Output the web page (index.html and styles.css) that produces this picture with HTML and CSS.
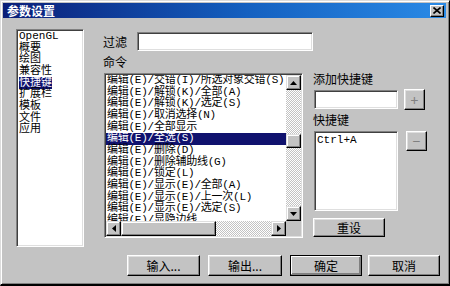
FILE: index.html
```html
<!DOCTYPE html>
<html lang="zh-CN">
<head>
  <meta charset="UTF-8" />
  <title>参数设置</title>
  <link rel="stylesheet" href="styles.css">
</head>
<body>

  <div class="window">
    <!-- title bar -->
    <div class="titlebar">
      <span class="title">参数设置</span>
      <span class="close-btn">
        <svg width="8" height="7" viewBox="0 0 8 7">
          <path d="M0.5 0.5 L7.5 6.5 M7.5 0.5 L0.5 6.5" stroke="#000" stroke-width="1.6" fill="none"/>
        </svg>
      </span>
    </div>

    <div class="body">
      <ul class="categories">
        <li>OpenGL</li>
        <li>概要</li>
        <li>绘图</li>
        <li>兼容性</li>
        <li><span class="selected">快捷键</span></li>
        <li>扩展栏</li>
        <li>模板</li>
        <li>文件</li>
        <li>应用</li>
      </ul>

      <div class="main">
        <div class="filter-row">
          <span class="label filter-label">过滤</span>
          <div class="field filter-input"></div>
        </div>
        <div class="label cmd-label">命令</div>

        <div class="field cmd-list">
          <ul class="cmd-items">
            <li>编辑(E)/交错(I)/所选对象交错(S)</li>
            <li>编辑(E)/解锁(K)/全部(A)</li>
            <li>编辑(E)/解锁(K)/选定(S)</li>
            <li>编辑(E)/取消选择(N)</li>
            <li>编辑(E)/全部显示</li>
            <li class="active">编辑(E)/全选(S)</li>
            <li>编辑(E)/删除(D)</li>
            <li>编辑(E)/删除辅助线(G)</li>
            <li>编辑(E)/锁定(L)</li>
            <li>编辑(E)/显示(E)/全部(A)</li>
            <li>编辑(E)/显示(E)/上一次(L)</li>
            <li>编辑(E)/显示(E)/选定(S)</li>
            <li>编辑(E)/显隐边线</li>
          </ul>
          <div class="vscroll">
            <span class="arrow-btn">
              <svg width="7" height="4" viewBox="0 0 7 4"><polygon points="3.5,0 7,4 0,4" fill="#000"/></svg>
            </span>
            <div class="track vtrack"><span class="thumb vthumb"></span></div>
            <span class="arrow-btn">
              <svg width="7" height="4" viewBox="0 0 7 4"><polygon points="0,0 7,0 3.5,4" fill="#000"/></svg>
            </span>
          </div>
          <div class="hscroll">
            <span class="arrow-btn">
              <svg width="4" height="7" viewBox="0 0 4 7"><polygon points="4,0 4,7 0,3.5" fill="#000"/></svg>
            </span>
            <span class="thumb hthumb"></span>
            <div class="track htrack"></div>
            <span class="arrow-btn">
              <svg width="4" height="7" viewBox="0 0 4 7"><polygon points="0,0 4,3.5 0,7" fill="#000"/></svg>
            </span>
          </div>
          <div class="corner"></div>
        </div>
      </div>

      <div class="side">
        <div class="label add-label">添加快捷键</div>
        <div class="add-row">
          <div class="field small-field"></div>
          <button class="btn small-btn plus-btn">+</button>
        </div>
        <div class="label keys-label">快捷键</div>
        <div class="keys-row">
          <div class="field keys-list">Ctrl+A</div>
          <button class="btn small-btn minus-btn">−</button>
        </div>
        <button class="btn reset-btn">重设</button>
      </div>
    </div>

    <!-- bottom buttons -->
    <div class="footer">
      <button class="btn btn-import">输入...</button>
      <button class="btn btn-export">输出...</button>
      <button class="btn btn-ok">确定</button>
      <button class="btn btn-cancel">取消</button>
    </div>
  </div>

</body>
</html>
```

FILE: styles.css
```css
body, html {
  margin: 0;
  padding: 0;
  background: #c3c3c3;
  font-family: "Noto Sans CJK SC", sans-serif;
  color: #000;
}

.window {
  width: 450px;
  height: 286px;
  box-sizing: border-box;
  padding: 2px 3px 2px 2px;
  background: #c3c3c3;
  border-top: 1px solid #dcdcdc;
  border-left: 1px solid #dcdcdc;
  border-right: 1px solid #000;
  border-bottom: 2px solid #000;
  box-shadow: inset 1px 1px #fff, inset -1px -1px #808080;
  overflow: hidden;
}

/* title bar */
.titlebar {
  height: 15px;
  display: flex;
  align-items: center;
  justify-content: space-between;
  padding: 0 2px 0 4px;
  background: linear-gradient(to right, #0a1e78, #1460c0 55%, #2a8ae6);
}

.title {
  color: #fff;
  font-size: 12px;
  font-weight: bold;
  line-height: 15px;
}

.close-btn {
  width: 14px;
  height: 12px;
  box-sizing: border-box;
  display: flex;
  align-items: center;
  justify-content: center;
  background: #c3c3c3;
  border: 1px solid;
  border-color: #fff #000 #000 #fff;
  box-shadow: inset -1px -1px #808080;
}

/* shared bits */
.label {
  font-size: 12px;
  line-height: 12px;
}

.field {
  box-sizing: border-box;
  background: #fff;
  border: 1px solid;
  border-color: #808080 #fff #fff #808080;
  box-shadow: inset 1px 1px #404040, inset -1px -1px #dfdfdf;
}

.btn {
  box-sizing: border-box;
  height: 21px;
  padding: 0;
  background: #c3c3c3;
  border: 1px solid;
  border-color: #fff #000 #000 #fff;
  box-shadow: inset -1px -1px #808080, inset 1px 1px #dfdfdf;
  font-family: "Noto Sans CJK SC", sans-serif;
  font-size: 12px;
  color: #000;
  display: flex;
  align-items: center;
  justify-content: center;
}

/* layout */
.body {
  display: flex;
  height: 218px;
  padding: 11px 0 0 13px;
}

.categories {
  width: 68px;
  height: 218px;
  margin: 0;
  padding: 1px 2px;
  list-style: none;
  box-sizing: border-box;
  background: #fff;
  border: 1px solid;
  border-color: #808080 #fff #fff #808080;
  box-shadow: inset 1px 1px #404040, inset -1px -1px #dfdfdf;
  font-family: "Liberation Mono", "Noto Sans CJK SC", monospace;
  font-size: 11px;
  line-height: 11.67px;
}

.categories .selected {
  background: #10126e;
  color: #fff;
}

.main {
  width: 210px;
  margin-left: 19px;
}

.filter-row {
  display: flex;
  align-items: center;
  height: 19px;
  margin-top: 3px;
}

.filter-label {
  width: 36px;
}

.filter-input {
  flex: none;
  width: 176px;
  height: 19px;
}

.cmd-label {
  margin: 5px 0;
}

.cmd-list {
  width: 199px;
  height: 165px;
  margin-left: 1px;
  padding: 1px;
  display: grid;
  grid-template-columns: 1fr 15px;
  grid-template-rows: 1fr 15px;
}

.cmd-items {
  margin: 0;
  padding: 0;
  list-style: none;
  overflow: hidden;
  font-family: "Liberation Mono", "Noto Sans CJK SC", monospace;
  font-size: 11px;
  line-height: 11.67px;
  letter-spacing: -0.25px;
}

.cmd-items li {
  white-space: nowrap;
  padding-left: 1px;
}

.cmd-items li.active {
  background: #10126e;
  color: #fff;
}

/* scrollbars */
.vscroll {
  display: flex;
  flex-direction: column;
}

.hscroll {
  display: flex;
}

.arrow-btn {
  flex: none;
  width: 15px;
  height: 15px;
  box-sizing: border-box;
  display: flex;
  align-items: center;
  justify-content: center;
  background: #c3c3c3;
  border: 1px solid;
  border-color: #dfdfdf #000 #000 #dfdfdf;
  box-shadow: inset -1px -1px #808080, inset 1px 1px #fff;
}

.track {
  flex: 1;
  background-color: #fff;
  background-image: repeating-conic-gradient(#c3c3c3 0 25%, #fff 0 50%);
  background-size: 2px 2px;
}

.thumb {
  display: block;
  box-sizing: border-box;
  background: #c3c3c3;
  border: 1px solid;
  border-color: #dfdfdf #000 #000 #dfdfdf;
  box-shadow: inset -1px -1px #808080, inset 1px 1px #fff;
}

.vthumb {
  height: 14px;
  margin-top: 44px;
}

.hthumb {
  width: 95px;
}

.corner {
  background: #c3c3c3;
}

/* right side */
.side {
  width: 127px;
}

.add-label {
  margin-top: 44px;
}

.add-row, .keys-row {
  display: flex;
  align-items: flex-start;
}

.add-row {
  height: 19px;
  margin-top: 5px;
}

.small-field {
  width: 84px;
  height: 19px;
  margin-left: 1px;
}

.small-btn {
  width: 21px;
  font-size: 14px;
  color: #808080;
}

.plus-btn {
  margin: -1px 0 0 6px;
}

.keys-label {
  margin-top: 5px;
}

.keys-row {
  margin-top: 5px;
}

.keys-list {
  width: 84px;
  height: 80px;
  margin-left: 1px;
  padding: 3px 2px;
  font-family: "Liberation Mono", monospace;
  font-size: 11px;
  line-height: 11px;
}

.minus-btn {
  height: 20px;
  margin-left: 8px;
}

.reset-btn {
  width: 72px;
  height: 19px;
  margin-top: 7px;
}

/* bottom buttons */
.footer {
  display: flex;
  justify-content: flex-end;
  margin-top: 8px;
  padding-right: 6px;
}

.btn-import { width: 73px; }
.btn-export { width: 74px; margin-left: 8px; }
.btn-ok {
  width: 72px;
  margin-left: 8px;
  border-color: #000;
  box-shadow: inset -1px -1px #808080, inset 1px 1px #fff, inset -2px -2px #808080;
}
.btn-cancel { width: 72px; margin-left: 6px; }
```
